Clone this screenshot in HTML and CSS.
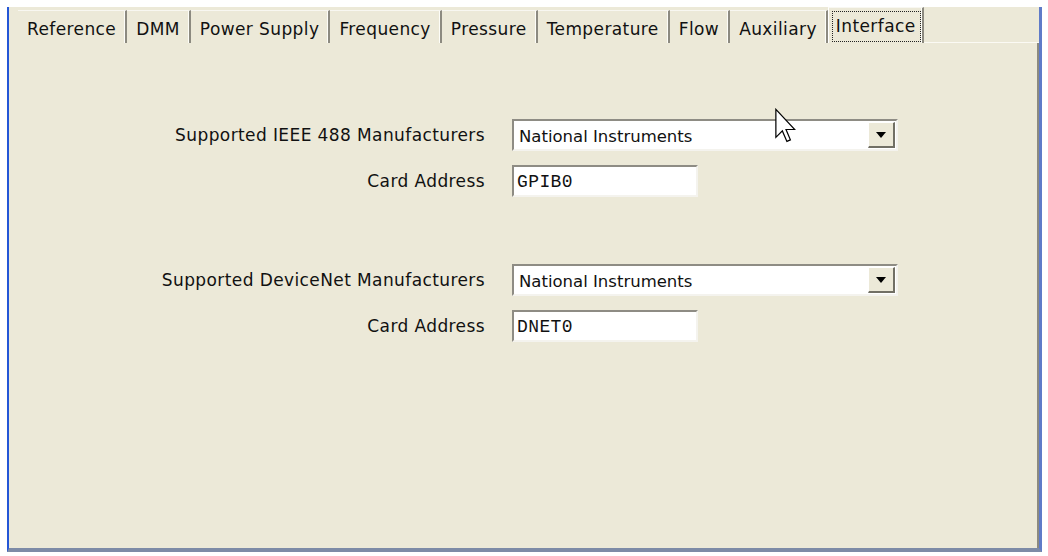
FILE: index.html
```html
<!DOCTYPE html>
<html>
<head>
<meta charset="utf-8">
<link rel="stylesheet" href="styles.css">
</head>
<body>
<div class="frame">
  <div class="tabs">
    <div class="tab">Reference</div>
    <div class="tab">DMM</div>
    <div class="tab">Power Supply</div>
    <div class="tab">Frequency</div>
    <div class="tab">Pressure</div>
    <div class="tab">Temperature</div>
    <div class="tab">Flow</div>
    <div class="tab">Auxiliary</div>
    <div class="tab active"><span class="focus">Interface</span></div>
    <div class="tab-rest"></div>
  </div>
  <div class="page">
    <div class="form">
      <div class="group">
        <label class="lbl">Supported IEEE 488 Manufacturers</label>
        <div class="combo"><span class="combo-text">National Instruments</span><span class="drop"><svg width="10" height="6" viewBox="0 0 10 6"><path d="M0 0h10L5 6z" fill="#000"/></svg></span></div>
        <label class="lbl">Card Address</label>
        <div class="field">GPIB0</div>
      </div>
      <div class="group">
        <label class="lbl">Supported DeviceNet Manufacturers</label>
        <div class="combo"><span class="combo-text">National Instruments</span><span class="drop"><svg width="10" height="6" viewBox="0 0 10 6"><path d="M0 0h10L5 6z" fill="#000"/></svg></span></div>
        <label class="lbl">Card Address</label>
        <div class="field">DNET0</div>
      </div>
    </div>
  </div>
  <svg class="cursor" width="21" height="36" viewBox="0 0 12 20"><path d="M0.5 0.5 L0.5 16.5 L4.2 12.8 L6.8 18.8 L8.8 17.9 L6.3 12 L11.3 12 Z" fill="#fff" stroke="#000" stroke-width="0.7" stroke-linejoin="miter"/></svg>
</div>
</body>
</html>
```

FILE: styles.css
```css
html, body {
  margin: 0;
  padding: 0;
  background: #ffffff;
}
body {
  width: 1048px;
  height: 556px;
  overflow: hidden;
  font-family: "DejaVu Sans", "Liberation Sans", sans-serif;
  font-size: 17px;
  letter-spacing: 0.4px;
  color: #111;
}
.frame {
  position: relative;
  margin: 7px 0 0 7px;
  width: 1035px;
  height: 545px;
  box-sizing: border-box;
  background: #ece9d8;
  border-left: 2px solid #2456d6;
  border-right: 3px solid #5f7bc8;
  border-bottom: 4px solid #7d8ba6;
  display: flex;
  flex-direction: column;
}
.tabs {
  display: flex;
  align-items: flex-end;
  height: 36px;
  padding-left: 9px;
}
.tab {
  height: 33px;
  box-sizing: border-box;
  padding: 3px 9px 0;
  display: flex;
  align-items: center;
  border-top: 1px solid #f8f7f1;
  border-right: 2px solid #8c8a80;
  box-shadow: inset -1px 0 0 #fdfdf8;
}
.tab.active {
  height: 36px;
  padding: 4px 2px 0 4px;
  align-items: flex-start;
  border-left: 1px solid #fff;
}
.focus {
  outline: 1px dotted #222;
  outline-offset: 0;
  padding: 0 4px 0 3px;
  line-height: 29px;
}
.tab-rest {
  flex: 1;
  align-self: stretch;
  border-bottom: 1px solid #fbfaf4;
}
.page {
  flex: 1;
  border-right: 2px solid #8c8a80;
}
.form {
  display: flex;
  flex-direction: column;
  gap: 67px;
  padding-top: 76px;
}
.group {
  display: grid;
  grid-template-columns: 476px 386px;
  column-gap: 27px;
  row-gap: 14px;
  align-items: center;
}
.lbl {
  text-align: right;
}
.combo {
  height: 32px;
  box-sizing: border-box;
  background: #fff;
  border-top: 2px solid #8e8c84;
  border-left: 2px solid #8e8c84;
  border-right: 2px solid #f4f3ee;
  border-bottom: 2px solid #f4f3ee;
  display: flex;
  align-items: stretch;
  padding-left: 5px;
  font-size: 16.5px;
  letter-spacing: 0;
}
.combo-text {
  flex: 1;
  display: flex;
  align-items: center;
  padding-top: 3px;
}
.drop {
  width: 27px;
  margin: 1px 1px 1px 0;
  background: #ece9d8;
  border-top: 1px solid #fff;
  border-left: 1px solid #fff;
  border-right: 2px solid #716f64;
  border-bottom: 2px solid #716f64;
  box-sizing: border-box;
  display: flex;
  align-items: center;
  justify-content: center;
}
.field {
  width: 186px;
  height: 32px;
  box-sizing: border-box;
  background: #fff;
  border-top: 2px solid #8e8c84;
  border-left: 2px solid #8e8c84;
  border-right: 2px solid #f4f3ee;
  border-bottom: 2px solid #f4f3ee;
  padding: 5px 0 0 3px;
  font-family: "Liberation Mono", monospace;
  font-size: 18px;
  letter-spacing: 0.4px;
}
.cursor {
  position: absolute;
  left: 766px;
  top: 101px;
}
```
